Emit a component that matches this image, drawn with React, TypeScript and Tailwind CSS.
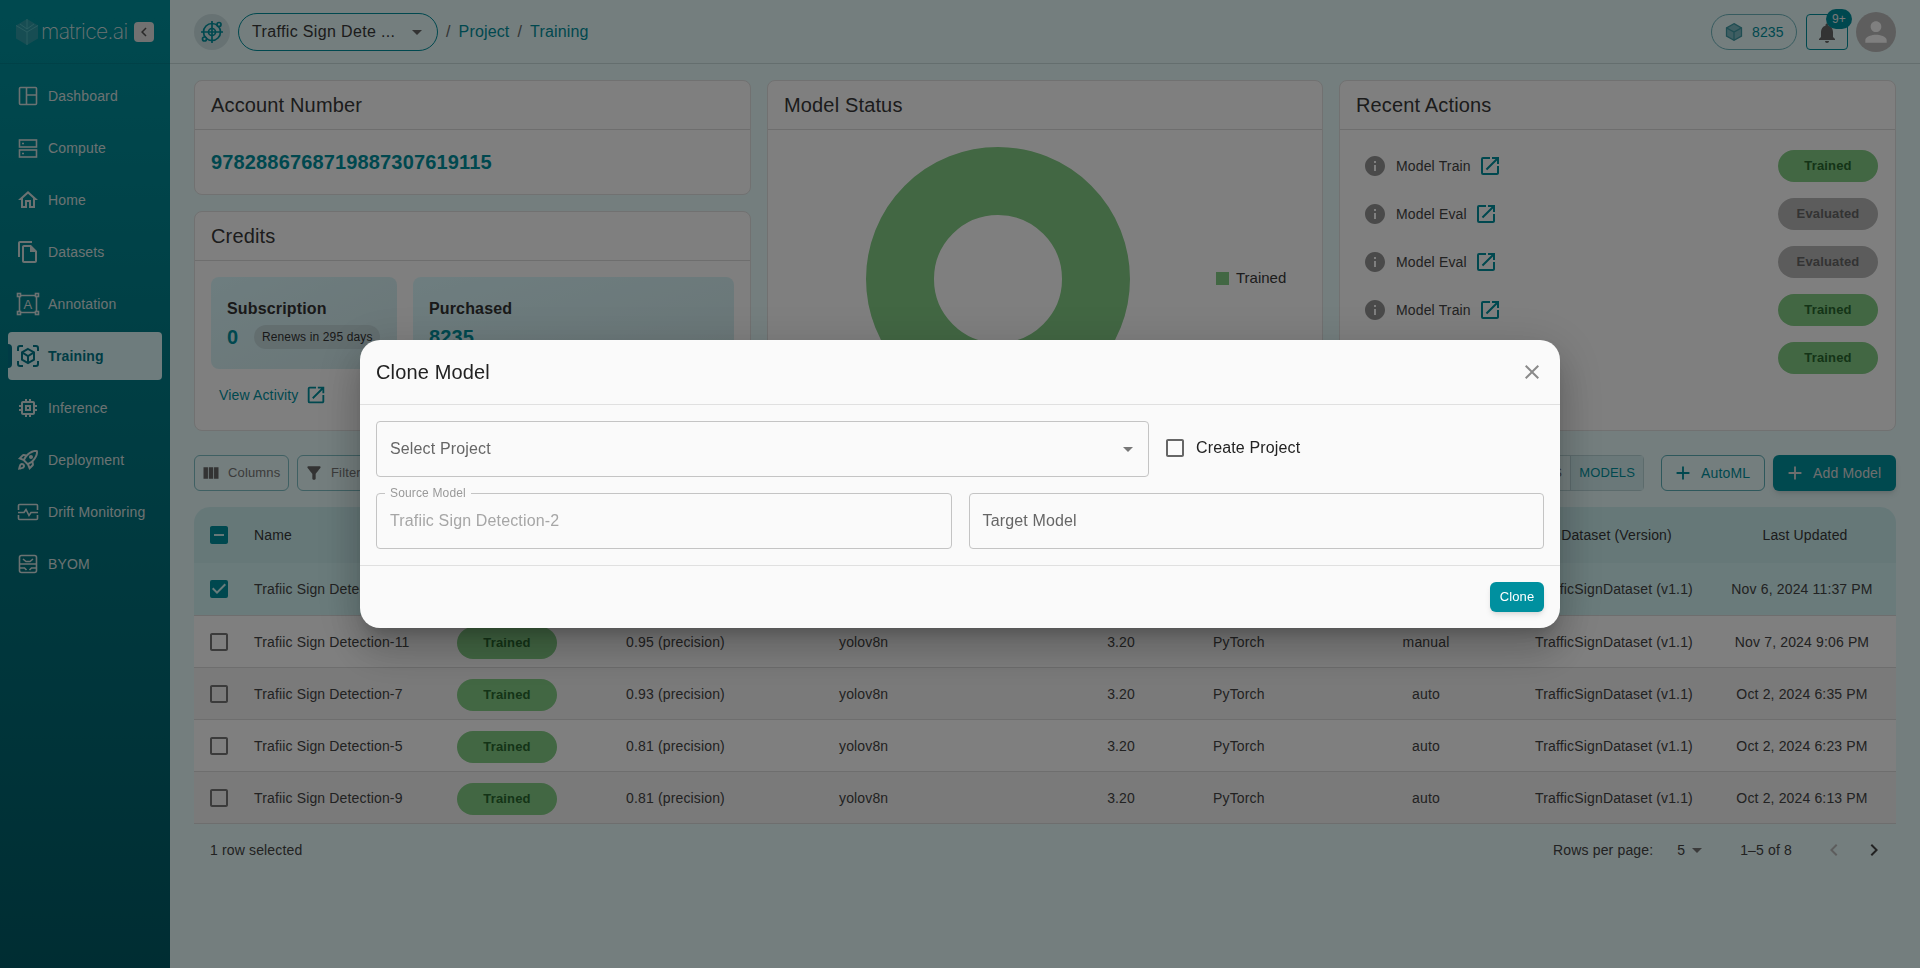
import {
  MdAdd,
  MdArrowDropDown,
  MdCheckBox,
  MdCheckBoxOutlineBlank,
  MdChevronLeft,
  MdChevronRight,
  MdClose,
  MdFilterAlt,
  MdIndeterminateCheckBox,
  MdInfo,
  MdNotifications,
  MdOpenInNew,
  MdOutlineFileCopy,
  MdOutlineHome,
  MdOutlineMemory,
  MdOutlineRocketLaunch,
  MdPerson,
  MdViewColumn,
} from "react-icons/md";

const iconProps = {
  width: 24,
  height: 24,
  viewBox: "0 0 24 24",
  fill: "none",
  stroke: "currentColor",
  strokeWidth: 1.6,
};

function DashboardIcon() {
  return (
    <svg {...iconProps}>
      <rect x="3.500" y="3.500" width="17" height="17" rx="1" />
      <path d="M10.500 3.500v17M10.500 11h10" />
    </svg>
  );
}

function ComputeIcon() {
  return (
    <svg {...iconProps}>
      <rect x="3.500" y="4" width="17" height="7" />
      <rect x="3.500" y="14" width="17" height="7" />
      <path d="M6 7.500h2M6 17.500h2" />
    </svg>
  );
}

function AnnotationIcon() {
  return (
    <svg {...iconProps}>
      <path d="M5 3.500h14M5 20.500h14M3.500 5v14M20.500 5v14" />
      <rect x="1.500" y="1.500" width="3" height="3" />
      <rect x="19.500" y="1.500" width="3" height="3" />
      <rect x="1.500" y="19.500" width="3" height="3" />
      <rect x="19.500" y="19.500" width="3" height="3" />
      <text x="12" y="17" textAnchor="middle" fontSize="13" fill="currentColor" stroke="none" fontFamily="'Liberation Sans', sans-serif">
        A
      </text>
    </svg>
  );
}

function TrainingIcon() {
  return (
    <svg {...iconProps} strokeWidth={2}>
      <path d="M2 7V4a2 2 0 0 1 2-2h3M17 2h3a2 2 0 0 1 2 2v3M22 17v3a2 2 0 0 1-2 2h-3M7 22H4a2 2 0 0 1-2-2v-3" />
      <path d="M12 5l6 3.400v7.200L12 19l-6-3.400V8.400z" />
      <path d="M6 8.400l6 3.600 6-3.600M12 12v7" />
    </svg>
  );
}

function DriftIcon() {
  return (
    <svg {...iconProps}>
      <path d="M2.500 10V5.500a1 1 0 0 1 1-1h17a1 1 0 0 1 1 1V10M2.500 15v3.500a1 1 0 0 0 1 1h17a1 1 0 0 0 1-1V15" />
      <path d="M2 12.500h6l2-3 3 6 2-3h7" />
    </svg>
  );
}

function ByomIcon() {
  return (
    <svg {...iconProps}>
      <rect x="3.500" y="3.500" width="17" height="17" rx="2" />
      <path d="M3.500 12h17M3.500 16h5l2 2M20.500 16h-5l-2 2M7 7l3 2.500h4L17 7" />
    </svg>
  );
}

function TargetGlobeIcon() {
  return (
    <svg width="24" height="24" viewBox="0 0 24 24" fill="none" stroke="currentColor" strokeWidth="1.700">
      <circle cx="12" cy="12" r="8.500" />
      <circle cx="12" cy="12" r="3.500" />
      <path d="M12 1v22M1 12h22" />
      <circle cx="19" cy="4.500" r="2" fill="#cfe4e6" />
      <circle cx="4.500" cy="19" r="2" fill="#cfe4e6" />
    </svg>
  );
}

function CubeIcon() {
  return (
    <svg width="20" height="20" viewBox="0 0 24 24" fill="#7fbcc4" stroke="#3f9aa5" strokeWidth="1.500">
      <path d="M12 2l9 5v10l-9 5-9-5V7z" />
      <path d="M3 7l9 5 9-5M12 12v10" fill="none" />
    </svg>
  );
}

function Logo() {
  return (
    <svg width="22" height="26" viewBox="0 0 22 26" className="shrink-0">
      <path d="M11 0l11 6.500v13L11 26 0 19.500v-13z" fill="#2f9ba6" />
      <path d="M11 0v10M0 6.500L11 13l11-6.500M11 13v13M4 5l7 5 7-5" fill="none" stroke="#5cc0c8" strokeWidth="0.800" />
    </svg>
  );
}

const navItems = [
  { label: "Dashboard", icon: <DashboardIcon /> },
  { label: "Compute", icon: <ComputeIcon /> },
  { label: "Home", icon: <MdOutlineHome size={24} /> },
  { label: "Datasets", icon: <MdOutlineFileCopy size={24} /> },
  { label: "Annotation", icon: <AnnotationIcon /> },
  { label: "Training", icon: <TrainingIcon />, active: true },
  { label: "Inference", icon: <MdOutlineMemory size={24} /> },
  { label: "Deployment", icon: <MdOutlineRocketLaunch size={24} /> },
  { label: "Drift Monitoring", icon: <DriftIcon /> },
  { label: "BYOM", icon: <ByomIcon /> },
];

const recentActions = [
  { label: "Model Train", status: "Trained" },
  { label: "Model Eval", status: "Evaluated" },
  { label: "Model Eval", status: "Evaluated" },
  { label: "Model Train", status: "Trained" },
  { label: "Model Train", status: "Trained" },
];

const rows = [
  { name: "Trafiic Sign Detection-2", score: "0.96 (precision)", type: "auto", date: "Nov 6, 2024 11:37 PM", selected: true },
  { name: "Trafiic Sign Detection-11", score: "0.95 (precision)", type: "manual", date: "Nov 7, 2024 9:06 PM" },
  { name: "Trafiic Sign Detection-7", score: "0.93 (precision)", type: "auto", date: "Oct 2, 2024 6:35 PM" },
  { name: "Trafiic Sign Detection-5", score: "0.81 (precision)", type: "auto", date: "Oct 2, 2024 6:23 PM" },
  { name: "Trafiic Sign Detection-9", score: "0.81 (precision)", type: "auto", date: "Oct 2, 2024 6:13 PM" },
];

const tableCols =
  "grid grid-cols-[60px_203px_169px_213px_161px_135px_211px_160px_216px_174px] items-center text-sm";

function StatusBadge({ status, className = "" }: { status: string; className?: string }) {
  const color =
    status === "Trained" ? "bg-[#85ce87] text-[#28682e]" : "bg-[#b9b9b9] text-[#666666]";
  return (
    <span className={`flex h-8 w-[100px] items-center justify-center rounded-full pt-[1px] text-[13px] font-bold ${color} ${className}`}>
      {status}
    </span>
  );
}

function Card({ title, children, className = "" }: { title: string; children: React.ReactNode; className?: string }) {
  return (
    <section className={`flex flex-col rounded-lg border border-[#e2e2e2] bg-white ${className}`}>
      <h2 className="flex h-[49px] shrink-0 items-center border-b border-[#dcdcdc] px-4 text-xl text-[#383838]">{title}</h2>
      {children}
    </section>
  );
}

export default function App() {
  return (
    <div className="flex h-[968px] overflow-hidden bg-[#e8fcfc] font-['Liberation_Sans',Arial,sans-serif] tracking-[0.15px]">
      {/* SIDEBAR */}
      <aside className="w-[170px] shrink-0 bg-gradient-to-b from-[#00939f] to-[#005b66] text-[#d9e4e4]">
        <div className="flex h-[64px] items-center border-b border-[#00838f] pl-4">
          <Logo />
          <span className="ml-[3px] w-[90px] font-['Inter',sans-serif] text-[21px] font-extralight tracking-[-0.6px]">matrice.ai</span>
          <button className="ml-[3px] flex h-5 w-5 items-center justify-center rounded bg-[#e3e3e3] text-[#555555]">
            <MdChevronLeft size={18} />
          </button>
        </div>
        <nav className="mt-2 flex flex-col gap-1 px-2">
          {navItems.map((item) => (
            <a
              key={item.label}
              className={
                item.active
                  ? "relative flex h-12 items-center gap-2 rounded bg-[#dcf8fa] pl-2 text-sm font-bold text-[#00798a]"
                  : "flex h-12 items-center gap-2 pl-2 text-sm"
              }
            >
              {item.active && <span className="absolute top-3 left-0 h-6 w-1 rounded-r bg-[#00768a]" />}
              <span className="flex w-[24px] justify-center">{item.icon}</span>
              {item.label}
            </a>
          ))}
        </nav>
      </aside>

      <div className="flex min-w-0 flex-1 flex-col">
        {/* TOP BAR */}
        <header className="flex h-[64px] shrink-0 items-center border-b border-[#c9dcdc] pr-6 pl-6">
          <div className="flex h-9 w-9 items-center justify-center rounded-full bg-[#cfe4e6] text-[#00919e]">
            <TargetGlobeIcon />
          </div>
          <div className="ml-2 flex h-[38px] w-[200px] items-center justify-between rounded-[19px] border border-[#00919e] pr-[8px] pl-[13px] text-base text-[#383838]">
            <span className="pt-px tracking-[0.35px]">Traffic Sign Dete ...</span>
            <MdArrowDropDown size={24} className="text-[#666666]" />
          </div>
          <div className="ml-2 flex items-center gap-2 pt-px text-base text-[#00919e]">
            <span className="text-[#666666]">/</span>
            <span>Project</span>
            <span className="text-[#666666]">/</span>
            <span>Training</span>
          </div>
          <div className="ml-auto flex h-9 w-[86px] items-center gap-2 rounded-full border border-[#6fb7bf] pl-[12px] text-sm text-[#00919e]">
            <CubeIcon />
            8235
          </div>
          <div className="relative ml-[9px] flex h-9 w-[42px] items-center justify-center rounded border border-[#00919e]">
            <MdNotifications size={24} className="mt-[2px] text-[#666666]" />
            <span className="absolute -top-[6px] left-[19px] flex h-5 w-[26px] items-center justify-center rounded-full bg-[#00919e] text-xs text-[#eeeeee]">9+</span>
          </div>
          <div className="ml-[8px] flex h-10 w-10 items-center justify-center rounded-full bg-[#bdbdbd] text-white">
            <MdPerson size={32} />
          </div>
        </header>

        <main className="flex-1 px-6 pt-4">
          {/* CARDS */}
          <div className="grid h-[351px] grid-cols-[557px_556px_557px] gap-x-4">
            <div className="flex flex-col gap-4">
              <Card title="Account Number" className="h-[115px]">
                <p className="flex flex-1 items-center px-4 text-xl font-bold text-[#00919e]">9782886768719887307619115</p>
              </Card>
              <Card title="Credits" className="flex-1 overflow-hidden">
                <div className="flex gap-4 px-4 pt-4">
                  <div className="h-[92px] w-[186px] rounded-lg bg-gradient-to-br from-[#dcfbff] to-[#d4ecee] px-4 pt-[20px]">
                    <p className="text-base font-bold text-[#333333]">Subscription</p>
                    <div className="mt-[2px] flex items-center gap-4">
                      <span className="text-xl font-bold text-[#00919e]">0</span>
                      <span className="flex h-6 w-[126px] items-center justify-center rounded-full bg-[#c6dcdf] text-xs whitespace-nowrap text-[#333333]">Renews in 295 days</span>
                    </div>
                  </div>
                  <div className="h-[92px] flex-1 rounded-lg bg-gradient-to-br from-[#dcfbff] to-[#d4ecee] px-4 pt-[20px]">
                    <p className="text-base font-bold text-[#333333]">Purchased</p>
                    <p className="mt-[2px] text-xl font-bold text-[#00919e]">8235</p>
                  </div>
                </div>
                <div className="mt-[15px] flex items-center gap-[6px] pl-6 text-sm text-[#00919e]">
                  View Activity
                  <MdOpenInNew size={22} />
                </div>
              </Card>
            </div>

            <Card title="Model Status">
              <div className="relative flex-1">
                <svg width="264" height="264" viewBox="0 0 264 264" className="absolute top-[17px] left-[98px]">
                  <circle cx="132" cy="132" r="98" fill="none" stroke="#85ce87" strokeWidth="68" />
                </svg>
                <div className="absolute top-[137px] left-[448px] flex items-center gap-[7px] text-[15px] tracking-normal text-[#383838]">
                  <span className="h-[13px] w-[13px] bg-[#85ce87]" />
                  Trained
                </div>
              </div>
            </Card>

            <Card title="Recent Actions">
              <ul className="flex flex-col gap-4 pt-[20px] pr-[17px] pl-[25px]">
                {recentActions.map((action, i) => (
                  <li key={i} className="flex h-8 items-center text-sm text-[#444444]">
                    <MdInfo size={24} className="-ml-[2px] text-[#949494]" />
                    <span className="ml-[9px]">{action.label}</span>
                    <MdOpenInNew size={24} className="ml-[7px] text-[#00919e]" />
                    <StatusBadge status={action.status} className="ml-auto" />
                  </li>
                ))}
              </ul>
            </Card>
          </div>

          {/* TOOLBAR */}
          <div className="mt-6 flex h-9 items-center text-sm">
            <button className="flex h-9 w-[95px] items-center gap-[7px] rounded-md border border-[#7fc0c6] pl-[6px] text-[13px] text-[#777777]">
              <MdViewColumn size={20} className="text-[#666666]" />
              Columns
            </button>
            <button className="ml-2 flex h-9 w-[95px] items-center gap-[7px] rounded-md border border-[#7fc0c6] pl-[6px] text-[13px] text-[#777777]">
              <MdFilterAlt size={20} className="text-[#666666]" />
              Filters
            </button>
            <div className="ml-auto flex h-9 rounded border border-[#b9d6d9] text-[13px]">
              <span className="flex items-center border-r border-[#b9d6d9] pr-2 pl-4 text-[#777777]">PROJECTS</span>
              <span className="flex items-center bg-[#d4f1f3] px-2 text-[#00919e]">MODELS</span>
            </div>
            <button className="ml-[17px] flex h-9 w-[104px] items-center gap-[7px] rounded-md border border-[#5db0b9] pl-[10px] text-sm text-[#00919e]">
              <MdAdd size={22} />
              AutoML
            </button>
            <button className="ml-2 flex h-9 w-[123px] items-center gap-[7px] rounded-md bg-[#00939f] pl-[11px] text-sm text-[#dddddd] shadow-md">
              <MdAdd size={22} />
              Add Model
            </button>
          </div>

          {/* TABLE */}
          <div className="mt-4">
            <div className={`${tableCols} h-14 rounded-t-2xl bg-[#ccf0f1] text-[#383838]`}>
              <MdIndeterminateCheckBox size={24} className="ml-[13px] text-[#00919e]" />
              <span>Name</span>
              <span>Status</span>
              <span>Best Score</span>
              <span>Model</span>
              <span className="text-right">Size (MB)</span>
              <span className="pl-[78px]">Framework</span>
              <span className="text-center">Type</span>
              <span className="pl-[5px] text-center">Dataset (Version)</span>
              <span className="pr-[8px] text-center">Last Updated</span>
            </div>
            {rows.map((row, i) => (
              <div
                key={row.name}
                className={`${tableCols} border-b border-[#dcdcdc] text-[#444444] ${
                  row.selected ? "h-[53px] bg-[#d4f7f7]" : i % 2 === 0 ? "h-[52px] bg-[#f5f5f5]" : "h-[52px] bg-white"
                }`}
              >
                {row.selected ? (
                  <MdCheckBox size={24} className="ml-[13px] text-[#00919e]" />
                ) : (
                  <MdCheckBoxOutlineBlank size={24} className="ml-[13px] text-[#777777]" />
                )}
                <span>{row.name}</span>
                <StatusBadge status="Trained" className="mt-[2px]" />
                <span>{row.score}</span>
                <span>yolov8n</span>
                <span className="text-right">3.20</span>
                <span className="pl-[78px]">PyTorch</span>
                <span className="text-center">{row.type}</span>
                <span className="text-center">TrafficSignDataset (v1.1)</span>
                <span className="pr-[14px] text-center">{row.date}</span>
              </div>
            ))}
            <div className="flex h-[52px] items-center pr-[10px] pl-4 text-sm text-[#444444]">
              <span>1 row selected</span>
              <span className="ml-auto">Rows per page:</span>
              <span className="ml-6">5</span>
              <MdArrowDropDown size={24} className="text-[#777777]" />
              <span className="ml-[31px]">1–5 of 8</span>
              <MdChevronLeft size={24} className="ml-[30px] text-[#bbbbbb]" />
              <MdChevronRight size={24} className="ml-4 text-[#444444]" />
            </div>
          </div>
        </main>
      </div>

      {/* BACKDROP + DIALOG */}
      <div className="fixed inset-0 z-10 bg-black/50" />
      <div className="fixed top-[340px] left-[360px] z-20 w-[1200px] rounded-[20px] bg-[#fafafa] shadow-[0_11px_15px_-7px_rgba(0,0,0,0.2),0_24px_38px_3px_rgba(0,0,0,0.14),0_9px_46px_8px_rgba(0,0,0,0.12)]">
        <div className="flex h-[65px] items-center justify-between border-b border-[#e0e0e0] pr-4 pl-4">
          <h2 className="text-xl text-[#222222]">Clone Model</h2>
          <MdClose size={24} className="text-[#8a8a8a]" />
        </div>
        <div className="flex flex-col gap-4 px-4 py-4">
          <div className="flex items-center">
            <div className="flex h-14 w-[773px] items-center justify-between rounded border border-[#c4c4c4] pr-[8px] pl-[13px] text-base text-[#666666]">
              Select Project
              <MdArrowDropDown size={24} className="text-[#777777]" />
            </div>
            <MdCheckBoxOutlineBlank size={24} className="-mt-[3px] ml-[14px] text-[#666666]" />
            <span className="-mt-[3px] ml-[9px] text-base text-[#222222]">Create Project</span>
          </div>
          <div className="flex gap-[17px]">
            <div className="relative flex h-14 flex-1 items-center rounded border border-[#c4c4c4] pl-[13px] text-base text-[#a6a6a6]">
              <span className="absolute -top-[9px] left-[8px] bg-[#fafafa] px-[5px] text-xs text-[#999999]">Source Model</span>
              Trafiic Sign Detection-2
            </div>
            <div className="flex h-14 flex-1 items-center rounded border border-[#c4c4c4] pl-[13px] text-base text-[#666666]">Target Model</div>
          </div>
        </div>
        <div className="flex h-[63px] items-center justify-end border-t border-[#e0e0e0] pr-4">
          <button className="flex h-[30px] w-[54px] items-center justify-center rounded-md bg-[#00909f] text-[13px] text-white shadow-md">Clone</button>
        </div>
      </div>
    </div>
  );
}
